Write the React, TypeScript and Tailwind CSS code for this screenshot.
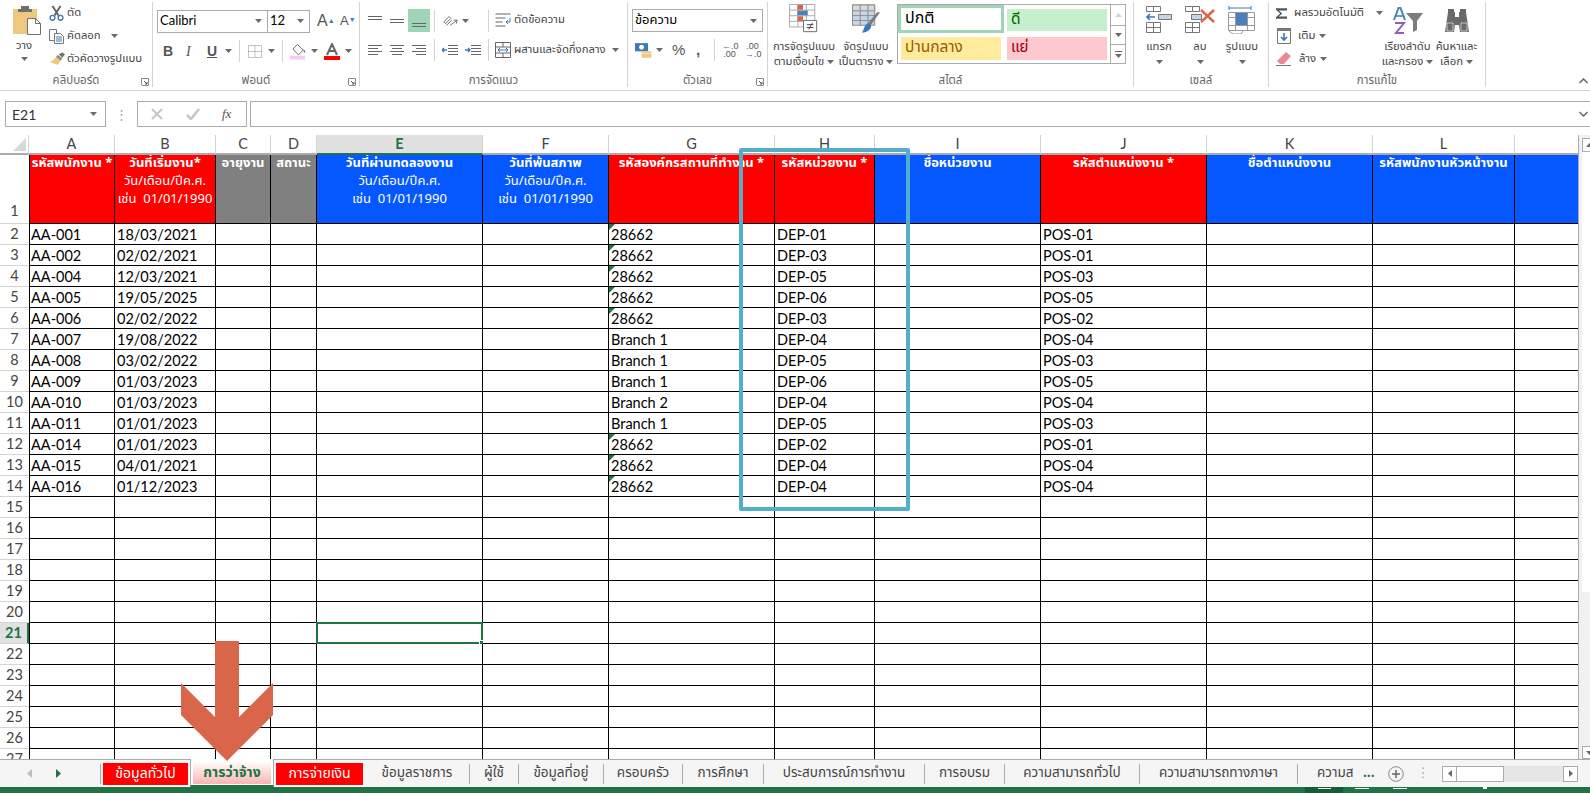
import React from 'react';

const thai = "font-['Noto_Sans_Thai','Noto_Sans','DejaVu_Sans',sans-serif]";

const Caret = ({ className = '' }: { className?: string }) => (
  <svg width="7" height="4" viewBox="0 0 7 4" className={`shrink-0 ${className}`}>
    <path d="M0 0h7L3.5 4z" fill="#6a6a6a" />
  </svg>
);

const Launcher = () => (
  <svg width="8" height="8" viewBox="0 0 8 8" className="shrink-0">
    <path d="M.5 7V.5H7.5V7.5H1" fill="none" stroke="#8a8a8a" />
    <path d="M3 3l3 3M6 4v2H4" fill="none" stroke="#555" />
  </svg>
);

const Group = ({ width, label, launcher, children }: { width: string; label: string; launcher?: boolean; children: React.ReactNode }) => (
  <div className={`${width} h-[85px] shrink-0 border-r border-[#d4d4d4] flex flex-col`}>
    <div className="h-[72px] flex">{children}</div>
    <div className="h-[13px] flex items-center justify-center relative text-[11.5px] leading-none text-[#666]">
      {label}
      {launcher && (
        <span className="absolute right-[3px] top-[4px]">
          <Launcher />
        </span>
      )}
    </div>
  </div>
);

const PasteIcon = () => (
  <svg width="28" height="29" viewBox="0 0 28 29">
    <path d="M0 3h24v25H0z" fill="#edc87e" />
    <path d="M8 0h8v3h3v3H5V3h3z" fill="#6e6e6e" />
    <path d="M14.500 12.500h8l5 5v11h-13z" fill="#fff" stroke="#6e6e6e" />
    <path d="M22.500 12.500v5h5" fill="none" stroke="#6e6e6e" />
  </svg>
);

const ScissorsIcon = () => (
  <svg width="15" height="16" viewBox="0 0 15 16">
    <path d="M3.500 1l6 9.500M11.500 1l-6 9.500" stroke="#666" strokeWidth="2" />
    <circle cx="3.500" cy="12.800" r="2.400" fill="none" stroke="#3d79b8" strokeWidth="1.400" />
    <circle cx="11.500" cy="12.800" r="2.400" fill="none" stroke="#3d79b8" strokeWidth="1.400" />
  </svg>
);

const CopyIcon = () => (
  <svg width="15" height="15" viewBox="0 0 15 15">
    <path d="M.5.5h7v11h-7z" fill="#fff" stroke="#777" />
    <path d="M5.500 4.500h6l3 3v7h-9z" fill="#fff" stroke="#777" />
    <path d="M7 8h6M7 10h6M7 12h6" stroke="#3d79b8" />
  </svg>
);

const BrushIcon = () => (
  <svg width="16" height="15" viewBox="0 0 18 16">
    <path d="M11 2l4 4 3-4-3-2z" fill="#6e6e6e" />
    <path d="M10 3l5 4-5 7-9-3c3-1 6-4 9-8z" fill="#edc87e" />
    <path d="M10 3l5 4-2 2-5-4z" fill="#8a8a8a" />
  </svg>
);

const Lines = ({ widths, y = [0, 3, 6, 9] }: { widths: [number, number][]; y?: number[] }) => (
  <svg width="16" height="12" viewBox="0 0 16 12">
    {widths.map(([x, w], i) => (
      <path key={i} d={`M${x} ${y[i] + 1.5}h${w}`} stroke="#666" />
    ))}
  </svg>
);

const IconCell = ({ children, active }: { children: React.ReactNode; active?: boolean }) => (
  <div className={`w-[22px] h-[23px] flex items-center justify-center ${active ? 'bg-[#9fd5b7]' : ''}`}>{children}</div>
);

const Sep = ({ className = '' }: { className?: string }) => <div className={`w-px h-[22px] shrink-0 bg-[#d4d4d4] ${className}`} />;

const Combo = ({ text, width, font }: { text: string; width: string; font: string }) => (
  <div className={`${width} h-[23px] border border-[#ababab] flex items-center justify-between pl-[2px] pr-[5px] text-[13px] text-black ${font}`}>
    {text}
    <Caret />
  </div>
);

const CondFormatIcon = () => (
  <svg width="30" height="30" viewBox="0 0 32 32">
    <path d="M.5.5h27v24H.5zM.5 6.500h27M.5 12.500h27M.5 18.500h27M9.500.5v24M18.500.5v24" fill="#fff" stroke="#a6a6a6" />
    <path d="M9 1h6v5H9zM9 13h6v5H9z" fill="#d9654a" />
    <path d="M9 7h11v5H9z" fill="#4a80bd" />
    <path d="M15.500 17.500h14v12h-14z" fill="#fff" stroke="#666" />
    <path d="M19 22h7M19 25h7M25 20l-4 7" stroke="#444" />
  </svg>
);

const TableFormatIcon = () => (
  <svg width="29" height="30" viewBox="0 0 30 30">
    <path d="M.5.5h23v21H.5z" fill="#c6d6e9" stroke="#8a8a8a" />
    <path d="M.5.5h23v6H.5z" fill="#d9d9d9" stroke="#8a8a8a" />
    <path d="M.5 11.500h23M.5 16.500h23M8.500.5v21M16.500.5v21" stroke="#8a8a8a" />
    <path d="M29 8L19 22l-3-2L26 8z" fill="#7d7d7d" />
    <path d="M16 20c3 0 5 2 3 5-2 3-6 4-9 4 3-2 2-8 6-9z" fill="#3d79b8" />
  </svg>
);

const InsertIcon = () => (
  <svg width="27" height="28" viewBox="0 0 27 28">
    <path d="M.5.5h14v5H.5zM7.500.5v5M.5 16.500h14v10H.5zM.5 21.500h14M7.500 16.500v10" fill="#fff" stroke="#777" />
    <path d="M12.500 8.500h13v5h-13z" fill="#c6d6e9" stroke="#777" />
    <path d="M1 11h8M4 8l-3 3 3 3" fill="none" stroke="#3d79b8" strokeWidth="1.600" />
  </svg>
);

const DeleteIcon = () => (
  <svg width="30" height="28" viewBox="0 0 30 28">
    <path d="M.5.5h14v5H.5zM7.500.5v5M.5 16.500h14v10H.5zM.5 21.500h14M7.500 16.500v10" fill="#fff" stroke="#777" />
    <path d="M6.500 8.500h10v5h-10z" fill="#c6d6e9" stroke="#777" />
    <path d="M16 4l13 12M29 4L16 16" stroke="#d9654a" strokeWidth="2.400" />
  </svg>
);

const FormatIcon = () => (
  <svg width="28" height="29" viewBox="0 0 28 29">
    <path d="M1 3h22M1 1v4M23 1v4" stroke="#3d79b8" />
    <path d="M.5 7.500h26v18H.5zM.5 12.500h26M.5 20.500h26M7.500 7.500v18M19.500 7.500v18" fill="#fff" stroke="#999" />
    <path d="M8 8h11v12H8z" fill="#4a80bd" />
    <path d="M1 26l4 3h8l2-3" fill="none" stroke="#999" />
  </svg>
);

const SortIcon = () => (
  <svg width="30" height="28" viewBox="0 0 30 28" className="translate-y-[1px]">
    <path d="M1 13L5.500 1h2L12 13" fill="none" stroke="#4a80bd" strokeWidth="2" />
    <path d="M3 9h7" stroke="#4a80bd" strokeWidth="1.600" />
    <path d="M2 16h9L3 26h8" fill="none" stroke="#8e62b0" strokeWidth="2" />
    <path d="M13 6h17l-6 8v9l-4 2V14z" fill="#7d7d7d" />
  </svg>
);

const FindIcon = () => (
  <svg width="26" height="24" viewBox="0 0 26 24" className="-translate-y-[1px]">
    <path d="M4 0h6v3h1v5h4V3h1V0h6v3l3 20H16l-1-7h-4l-1 7H1L4 3z" fill="#6a6a6a" />
    <path d="M3 14h6v8H3zM17 14h6v8h-6z" fill="none" stroke="#fff" strokeWidth=".6" />
  </svg>
);

const SumIcon = () => (
  <svg width="16" height="15" viewBox="0 0 16 15">
    <path d="M0 0h16v3H4l5 4.500L4 12h12v3H0v-2l6-5.500L0 2z" fill="#555" />
  </svg>
);

const BigButton = ({ width, icon, lines }: { width: string; icon: React.ReactNode; lines: React.ReactNode[] }) => (
  <div className={`${width} flex flex-col items-center text-[11.3px] text-[#444]`}>
    <div className="h-[32px] flex items-end justify-center">{icon}</div>
    <div className="h-[15px] mt-[5px] leading-[15px] whitespace-nowrap flex items-center gap-[3px]">{lines[0]}</div>
    <div className="h-[15px] leading-[15px] whitespace-nowrap flex items-center gap-[3px]">{lines[1]}</div>
  </div>
);

const Ribbon = () => (
  <div className={`h-[91px] border-b border-[#d4d4d4] flex pt-[2px] bg-white ${thai}`}>
    <Group width="w-[153px]" label="คลิปบอร์ด" launcher>
      <div className="w-[48px] flex flex-col items-center pt-[4px]">
        <div className="self-start ml-[13px]"><PasteIcon /></div>
        <span className="text-[11.3px] text-[#444] mt-[3px] leading-[15px]">วาง</span>
        <Caret className="mt-[4px]" />
      </div>
      <div className="flex flex-col text-[11.3px] text-[#444] pt-[2px] gap-[5px] whitespace-nowrap">
        <div className="h-[18px] flex items-center"><span className="w-[19px] flex justify-center pr-[2px]"><ScissorsIcon /></span>ตัด</div>
        <div className="h-[18px] flex items-center"><span className="w-[19px] flex pl-[1px]"><CopyIcon /></span>คัดลอก<Caret className="ml-[10px]" /></div>
        <div className="h-[18px] flex items-center"><span className="w-[19px] flex pl-[1px]"><BrushIcon /></span>ตัวคัดวางรูปแบบ</div>
      </div>
    </Group>

    <Group width="w-[207px]" label="ฟอนต์" launcher>
      <div className="flex flex-col pl-[4px] pt-[7px]">
        <div className="flex items-center">
          <Combo text="Calibri" width="w-[111px]" font="font-['Lato',sans-serif]" />
          <Combo text="12" width="w-[43px] -ml-px" font="font-['Lato',sans-serif]" />
          <span className="ml-[7px] w-[23px] text-[16px] text-[#555] font-['Liberation_Sans',sans-serif]">A<sup className="text-[7px] text-[#3d79b8]">▲</sup></span>
          <span className="w-[20px] text-[13px] text-[#555] font-['Liberation_Sans',sans-serif]">A<sup className="text-[7px] text-[#3d79b8]">▼</sup></span>
        </div>
        <div className="flex items-center mt-[6px] h-[24px] text-[#555] font-['Liberation_Serif',serif]">
          <span className="w-[9px] ml-[6px] text-[14px] font-bold font-['Liberation_Sans',sans-serif]">B</span>
          <span className="w-[7px] ml-[14px] text-[14px] italic">I</span>
          <span className="w-[10px] ml-[14px] text-[14px] font-bold underline font-['Liberation_Sans',sans-serif]">U</span>
          <Caret className="ml-[8px]" />
          <Sep className="ml-[7px]" />
          <svg width="14" height="13" viewBox="0 0 14 13" className="ml-[8px]">
            <path d="M.5.500h13v12H.5zM.5 6.500h13M7 .5v12" fill="none" stroke="#8a8a8a" strokeDasharray="1 1" />
          </svg>
          <Caret className="ml-[6px]" />
          <Sep className="ml-[7px]" />
          <svg width="16" height="17" viewBox="0 0 17 17" className="ml-[7px]">
            <path d="M8 1l6 6-5 5-6-6z" fill="#fff" stroke="#666" />
            <path d="M14 6c2 1 3 3 1 4z" fill="#3d79b8" />
            <path d="M0 13h16v4H0z" fill="#fbc9f1" />
          </svg>
          <Caret className="ml-[5px]" />
          <svg width="16" height="17" viewBox="0 0 16 17" className="ml-[6px]">
            <path d="M3 12L8 1l5 11M5 8h6" fill="none" stroke="#666" strokeWidth="2" />
            <path d="M0 13h16v4H0z" fill="#ff0000" />
          </svg>
          <Caret className="ml-[5px]" />
        </div>
      </div>
    </Group>

    <Group width="w-[268px]" label="การจัดแนว">
      <div className="flex flex-col pl-[4px] pt-[7px]">
        <div className="flex items-center">
          <IconCell><Lines widths={[[1, 14], [1, 14]]} /></IconCell>
          <IconCell><Lines widths={[[1, 14], [1, 14]]} y={[3, 6]} /></IconCell>
          <IconCell active><Lines widths={[[1, 14], [1, 14]]} y={[7, 10]} /></IconCell>
          <Sep className="ml-[4px]" />
          <svg width="16" height="16" viewBox="0 0 18 16" className="ml-[7px]">
            <path d="M2 9l6-6 2 2-6 6zM5 13l6-6M9 13l8-6M17 7l-4 0M17 7l-1 4" fill="none" stroke="#666" />
          </svg>
          <Caret className="ml-[4px]" />
          <Sep className="ml-[19px]" />
          <svg width="16" height="15" viewBox="0 0 16 15" className="ml-[6px]">
            <path d="M.5 1h15M.5 5h10M.5 9h7M.5 13h10" stroke="#666" />
            <path d="M15 5v4H11M13 7l-2 2 2 2" fill="none" stroke="#3d79b8" />
          </svg>
          <span className="ml-[3px] text-[11.3px] text-[#444] whitespace-nowrap">ตัดข้อความ</span>
        </div>
        <div className="flex items-center mt-[6px] h-[24px]">
          <IconCell><Lines widths={[[1, 14], [1, 10], [1, 14], [1, 10]]} /></IconCell>
          <IconCell><Lines widths={[[1, 14], [3, 10], [1, 14], [3, 10]]} /></IconCell>
          <IconCell><Lines widths={[[1, 14], [5, 10], [1, 14], [5, 10]]} /></IconCell>
          <Sep className="ml-[4px]" />
          <svg width="16" height="12" viewBox="0 0 16 12" className="ml-[7px]">
            <path d="M6 1.500h10M6 4.500h10M6 7.500h10M6 10.500h10" stroke="#666" />
            <path d="M5 6H0M2 4L0 6l2 2" fill="none" stroke="#3d79b8" strokeWidth="1.400" />
          </svg>
          <svg width="16" height="12" viewBox="0 0 16 12" className="ml-[7px]">
            <path d="M6 1.500h10M6 4.500h10M6 7.500h10M6 10.500h10" stroke="#666" />
            <path d="M0 6h5M3 4l2 2-2 2" fill="none" stroke="#3d79b8" strokeWidth="1.400" />
          </svg>
          <Sep className="ml-[7px]" />
          <svg width="16" height="16" viewBox="0 0 16 16" className="ml-[6px]">
            <path d="M.5.500h15v15H.5zM.5 5h15M.5 11h15M8 .5V5M8 11v4.500" fill="#fff" stroke="#666" />
            <path d="M3 8h10M5 6L3 8l2 2M11 6l2 2-2 2" fill="none" stroke="#3d79b8" />
          </svg>
          <span className="ml-[3px] w-[98px] text-[11.3px] text-[#444] whitespace-nowrap">ผสานและจัดกึ่งกลาง</span>
          <Caret />
        </div>
      </div>
    </Group>

    <Group width="w-[140px]" label="ตัวเลข" launcher>
      <div className="flex flex-col pl-[4px] pt-[7px]">
        <Combo text="ข้อความ" width="w-[131px]" font="" />
        <div className="flex items-center mt-[6px] h-[24px] text-[#555]">
          <svg width="18" height="17" viewBox="0 0 22 18" className="ml-[3px]">
            <path d="M0 0h16v10H0z" fill="#3d79b8" />
            <circle cx="8" cy="5" r="3" fill="#fff" />
            <path d="M8 10h12v2.500H8zM8 13h12v2.500H8zM8 15.500h12V18H8z" fill="#edc87e" />
          </svg>
          <Caret className="ml-[3px]" />
          <span className="ml-[9px] w-[14px] text-[15px] font-['Liberation_Sans',sans-serif]">%</span>
          <span className="ml-[10px] w-[5px] text-[15px] font-bold font-['Liberation_Sans',sans-serif]">,</span>
          <Sep className="ml-[13px]" />
          <div className="ml-[7px] w-[15px] text-[9px] leading-[8px] text-center font-['Liberation_Sans',sans-serif]"><span className="text-[#3d79b8]">←</span>.0<br />.00</div>
          <div className="ml-[8px] w-[15px] text-[9px] leading-[8px] text-center font-['Liberation_Sans',sans-serif]">.00<br /><span className="text-[#3d79b8]">→</span>.0</div>
        </div>
      </div>
    </Group>

    <Group width="w-[366px]" label="สไตล์">
      <div className="flex pl-[3px]">
        <BigButton width="w-[66px]" icon={<CondFormatIcon />} lines={['การจัดรูปแบบ', <>ตามเงื่อนไข<Caret /></>]} />
        <BigButton width="w-[58px]" icon={<TableFormatIcon />} lines={['จัดรูปแบบ', <>เป็นตาราง<Caret /></>]} />
      </div>
      <div className="ml-[2px] mt-[2px] w-[229px] h-[60px] border border-[#ababab] flex">
        <div className="w-[212px] grid grid-cols-[106px_100px] gap-x-[3px] content-start">
          <div className="h-[28px] border-[3px] border-[#9fd5b7] px-[4px] text-[16px] leading-[21px] text-black">ปกติ</div>
          <div className="h-[22px] mt-[4px] bg-[#c6efce] px-[4px] text-[15.5px] leading-[21px] text-[#006100]">ดี</div>
          <div className="h-[23px] mt-[4px] ml-[3px] mr-[3px] bg-[#ffeb9c] px-[4px] text-[15.5px] leading-[22px] text-[#9c5700]">ปานกลาง</div>
          <div className="h-[23px] mt-[4px] bg-[#ffc7ce] px-[4px] text-[15.5px] leading-[22px] text-[#9c0006]">แย่</div>
        </div>
        <div className="flex-1 border-l border-[#ababab] flex flex-col">
          <div className="h-[20px] flex items-center justify-center"><Caret className="rotate-180 opacity-30" /></div>
          <div className="h-[20px] border-y border-[#ababab] flex items-center justify-center"><Caret /></div>
          <div className="flex-1 flex flex-col items-center justify-center gap-[2px]"><div className="w-[7px] h-px bg-[#666]" /><Caret /></div>
        </div>
      </div>
    </Group>

    <Group width="w-[135px]" label="เซลล์">
      <div className="flex pl-[4px]">
        <BigButton width="w-[42px]" icon={<InsertIcon />} lines={['แทรก', <Caret />]} />
        <BigButton width="w-[40px]" icon={<DeleteIcon />} lines={['ลบ', <Caret />]} />
        <BigButton width="w-[44px]" icon={<FormatIcon />} lines={['รูปแบบ', <Caret />]} />
      </div>
    </Group>

    <Group width="w-[217px]" label="การแก้ไข">
      <div className="flex flex-col text-[11.3px] text-[#444] pl-[7px] pt-[2px] gap-[5px] w-[114px] whitespace-nowrap">
        <div className="h-[18px] flex items-center gap-[4px]">
          <SumIcon /><span className="ml-[3px]">ผลรวมอัตโนมัติ</span><Caret className="ml-[8px]" />
        </div>
        <div className="h-[18px] flex items-center gap-[4px]">
          <svg width="14" height="16" viewBox="0 0 14 16" className="ml-[1px] mr-[3px]">
            <path d="M.5.500h13v15H.5z" fill="#fff" stroke="#777" />
            <path d="M0 0h14v3H0z" fill="#777" />
            <path d="M7 5v7M4 9l3 3 3-3" fill="none" stroke="#3d79b8" strokeWidth="1.600" />
          </svg>
          <span>เติม</span><Caret />
        </div>
        <div className="h-[18px] flex items-center gap-[4px]">
          <svg width="16" height="14" viewBox="0 0 16 14" className="mr-[3px]">
            <path d="M10 0l5 4-7 8H4L1 9z" fill="#e98a95" />
            <path d="M0 13.500h15" stroke="#777" />
          </svg>
          <span>ล้าง</span><Caret />
        </div>
      </div>
      <div className="flex">
        <BigButton width="w-[49px]" icon={<SortIcon />} lines={['เรียงลำดับ', <>และกรอง<Caret /></>]} />
        <BigButton width="w-[49px]" icon={<FindIcon />} lines={['ค้นหาและ', <>เลือก<Caret /></>]} />
      </div>
    </Group>

    <div className="flex-1 flex justify-end items-end pb-[6px] pr-[2px]">
      <svg width="9" height="6" viewBox="0 0 9 6"><path d="M.5 5l4-4 4 4" fill="none" stroke="#666" strokeWidth="1.500" /></svg>
    </div>
  </div>
);

const FormulaBar = () => (
  <div className="h-[26px] mt-[10px] flex items-stretch font-['Lato',sans-serif]">
    <div className="ml-[5px] w-[101px] border border-[#ababab] flex items-center justify-between pl-[6px] pr-[8px] text-[14px] text-[#333]">
      E21
      <Caret />
    </div>
    <div className="w-[31px] flex items-center justify-center text-[#aaa] text-[13px] leading-none">⋮</div>
    <div className="w-[110px] border border-[#ababab] flex items-center text-[#bcbcbc]">
      <svg width="12" height="12" viewBox="0 0 12 12" className="ml-[13px]"><path d="M1 1l10 10M11 1L1 11" stroke="#c6c6c6" strokeWidth="2" /></svg>
      <svg width="14" height="12" viewBox="0 0 14 12" className="ml-[23px]"><path d="M1 7l4 4 8-10" fill="none" stroke="#c6c6c6" strokeWidth="2.500" /></svg>
      <span className="ml-[22px] text-[13px] italic text-[#555] font-['Liberation_Serif',serif]">fx</span>
    </div>
    <div className="ml-[3px] flex-1 border-y border-l border-[#ababab] flex items-center justify-end pr-[2px]">
      <svg width="9" height="6" viewBox="0 0 9 6"><path d="M.5 1l4 4 4-4" fill="none" stroke="#666" strokeWidth="1.500" /></svg>
    </div>
  </div>
);

const codes = ['AA-001', 'AA-002', 'AA-004', 'AA-005', 'AA-006', 'AA-007', 'AA-008', 'AA-009', 'AA-010', 'AA-011', 'AA-014', 'AA-015', 'AA-016'];
const startDates = ['18/03/2021', '02/02/2021', '12/03/2021', '19/05/2025', '02/02/2022', '19/08/2022', '03/02/2022', '01/03/2023', '01/03/2023', '01/01/2023', '01/01/2023', '04/01/2021', '01/12/2023'];
const branches = ['28662', '28662', '28662', '28662', '28662', 'Branch 1', 'Branch 1', 'Branch 1', 'Branch 2', 'Branch 1', '28662', '28662', '28662'];
const deps = ['DEP-01', 'DEP-03', 'DEP-05', 'DEP-06', 'DEP-03', 'DEP-04', 'DEP-05', 'DEP-06', 'DEP-04', 'DEP-05', 'DEP-02', 'DEP-04', 'DEP-04'];
const positions = ['POS-01', 'POS-01', 'POS-03', 'POS-05', 'POS-02', 'POS-04', 'POS-03', 'POS-05', 'POS-04', 'POS-03', 'POS-01', 'POS-04', 'POS-04'];

interface Column {
  letter: string;
  width: string;
  fill: string;
  title: string;
  sub?: boolean;
  left?: boolean;
  values?: string[];
}

const columns: Column[] = [
  { letter: 'A', width: 'w-[86px]', fill: 'bg-[#ff0000]', title: 'รหัสพนักงาน *', values: codes, left: true },
  { letter: 'B', width: 'w-[101px]', fill: 'bg-[#ff0000]', title: 'วันที่เริ่มงาน*', sub: true, values: startDates },
  { letter: 'C', width: 'w-[55px]', fill: 'bg-[#808080]', title: 'อายุงาน' },
  { letter: 'D', width: 'w-[46px]', fill: 'bg-[#808080]', title: 'สถานะ' },
  { letter: 'E', width: 'w-[166px]', fill: 'bg-[#0558ff]', title: 'วันที่ผ่านทดลองงาน', sub: true },
  { letter: 'F', width: 'w-[126px]', fill: 'bg-[#0558ff]', title: 'วันที่พ้นสภาพ', sub: true },
  { letter: 'G', width: 'w-[166px]', fill: 'bg-[#ff0000]', title: 'รหัสองค์กรสถานที่ทำงาน *', values: branches },
  { letter: 'H', width: 'w-[100px]', fill: 'bg-[#ff0000]', title: 'รหัสหน่วยงาน *', values: deps },
  { letter: 'I', width: 'w-[166px]', fill: 'bg-[#0558ff]', title: 'ชื่อหน่วยงาน' },
  { letter: 'J', width: 'w-[166px]', fill: 'bg-[#ff0000]', title: 'รหัสตำแหน่งงาน *', values: positions },
  { letter: 'K', width: 'w-[166px]', fill: 'bg-[#0558ff]', title: 'ชื่อตำแหน่งงาน' },
  { letter: 'L', width: 'w-[142px]', fill: 'bg-[#0558ff]', title: 'รหัสพนักงานหัวหน้างาน' },
  { letter: 'M', width: 'w-[202px]', fill: 'bg-[#0558ff]', title: 'ชื่อหัวหน้างาน' }
];

const rowNumbers = Array.from({ length: 26 }, (_, i) => i + 2);

const Sheet = () => (
  <div className="flex-1 min-h-0 mt-[8px] flex">
    <div className="w-[1578px] overflow-hidden">
      {/* column letters */}
      <div className="flex h-[20px] text-[14.5px] text-[#444] font-['Lato',sans-serif]">
        <div className="w-[29px] shrink-0 border-r border-[#d4d4d4] border-b-2 border-b-[#ababab] flex items-end justify-end p-[2px]">
          <svg width="13" height="13" viewBox="0 0 13 13"><path d="M13 0v13H0z" fill="#d8d8d8" /></svg>
        </div>
        {columns.map(col => (
          <div
            key={col.letter}
            className={`${col.width} shrink-0 flex items-center justify-center border-r border-[#d4d4d4] border-b-2 ${
              col.letter === 'E' ? 'bg-[#e1e1e1] border-b-[#217346] text-[#217346] font-bold' : 'border-b-[#ababab]'
            }`}
          >
            {col.letter}
          </div>
        ))}
      </div>

      {/* first row: field titles */}
      <div className="flex h-[69px]">
        <div className="w-[29px] shrink-0 border-b border-[#d4d4d4] flex items-end justify-center pb-[1px] text-[14.5px] text-[#444] font-['Lato',sans-serif]">1</div>
        {columns.map(col => (
          <div
            key={col.letter}
            className={`${col.width} ${col.fill} ${col.left ? 'border-l' : ''} shrink-0 border-r border-b border-black text-white text-[13px] leading-[17px] text-center font-bold whitespace-nowrap overflow-hidden ${thai}`}
          >
            {col.title}
            {col.sub && (
              <div className="font-normal leading-[18px]">
                วัน/เดือน/ปีค.ศ.
                <br />
                เช่น&nbsp; 01/01/1990
              </div>
            )}
          </div>
        ))}
      </div>

      {/* data rows */}
      {rowNumbers.map((n, r) => (
        <div key={n} className="flex h-[21px] text-[14.5px] text-black font-['Lato',sans-serif]">
          <div
            className={`w-[29px] shrink-0 border-b border-[#d4d4d4] flex items-center justify-center text-[#444] ${
              n === 21 ? 'bg-[#e1e1e1] text-[#217346] font-bold border-r-2 border-r-[#217346]' : ''
            }`}
          >
            {n}
          </div>
          {columns.map(col => {
            const value = col.values?.[r] ?? '';
            return (
              <div
                key={col.letter}
                className={`${col.width} ${col.left ? 'border-l pl-[1px]' : 'pl-[2px]'} shrink-0 relative border-r border-b border-black leading-[21px] whitespace-nowrap`}
              >
                {value}
                {value === '28662' && (
                  <svg width="6" height="6" viewBox="0 0 6 6" className="absolute left-0 top-0">
                    <path d="M0 0h6L0 6z" fill="#217346" />
                  </svg>
                )}
                {n === 21 && col.letter === 'E' && (
                  <div className="absolute -left-px -top-px -right-px -bottom-px border-2 border-[#217346]">
                    <div className="absolute -right-[3px] -bottom-[3px] w-[5px] h-[5px] bg-[#217346] border border-white" />
                  </div>
                )}
              </div>
            );
          })}
        </div>
      ))}
    </div>

    {/* vertical scroll bar */}
    <div className="flex-1 overflow-hidden border-l border-[#ababab] flex flex-col bg-[#f1f1f1] pl-[3px] pt-[3px]">
      <div className="w-[17px] h-[14px] shrink-0 bg-white border border-[#ababab] flex items-center pl-[3px]"><Caret className="rotate-180" /></div>
      <div className="w-[17px] h-[440px] shrink-0 bg-white" />
      <div className="flex-1" />
      <div className="w-[17px] h-[13px] shrink-0 bg-white border border-[#ababab] flex items-center pl-[3px]"><Caret /></div>
    </div>
  </div>
);

const tabs = [
  { name: 'ข้อมูลทั่วไป', width: 'w-[89px]', kind: 'red' },
  { name: 'การว่าจ้าง', width: 'w-[84px]', kind: 'active' },
  { name: 'การจ่ายเงิน', width: 'w-[91px]', kind: 'red' },
  { name: 'ข้อมูลราชการ', width: 'w-[105px]', kind: 'plain' },
  { name: 'ผู้ใช้', width: 'w-[49px]', kind: 'plain' },
  { name: 'ข้อมูลที่อยู่', width: 'w-[85px]', kind: 'plain' },
  { name: 'ครอบครัว', width: 'w-[79px]', kind: 'plain' },
  { name: 'การศึกษา', width: 'w-[81px]', kind: 'plain' },
  { name: 'ประสบการณ์การทำงาน', width: 'w-[161px]', kind: 'plain' },
  { name: 'การอบรม', width: 'w-[80px]', kind: 'plain' },
  { name: 'ความสามารถทั่วไป', width: 'w-[135px]', kind: 'plain' },
  { name: 'ความสามารถทางภาษา', width: 'w-[158px]', kind: 'plain' }
];

const TabBar = () => (
  <div className={`h-[28px] shrink-0 border-t border-[#ababab] bg-[#f5f5f5] flex items-center text-[13.5px] text-[#444] ${thai}`}>
    <div className="w-[101px] h-[20px] shrink-0 border-r border-[#ababab] flex items-center">
      <svg width="5" height="9" viewBox="0 0 5 9" className="ml-[27px]"><path d="M5 0v9L0 4.500z" fill="#bdbdbd" /></svg>
      <svg width="5" height="9" viewBox="0 0 5 9" className="ml-[24px]"><path d="M0 0v9l5-4.500z" fill="#217346" /></svg>
    </div>
    {tabs.map(tab => (
      <div key={tab.name} className={`${tab.width} shrink-0 flex items-center whitespace-nowrap`}>
        {tab.kind === 'plain' && (
          <div className="w-full h-[20px] border-r border-[#ababab] flex items-center justify-center">{tab.name}</div>
        )}
        {tab.kind === 'red' && (
          <div className="h-[22px] w-full pl-[2px] pr-[2px] flex">
            <div className="flex-1 bg-[#ff0000] text-white text-[14px] flex items-center justify-center">{tab.name}</div>
          </div>
        )}
        {tab.kind === 'active' && (
          <div className="h-[28px] w-full -mt-px bg-white border-x border-[#ababab] border-b-2 border-b-[#217346] px-[2px] pt-[2px] pb-[1px]">
            <div className="h-full bg-gradient-to-b from-white to-[#f8b4b4] text-[#217346] text-[14px] font-bold flex items-center justify-center">{tab.name}</div>
          </div>
        )}
      </div>
    ))}
    <div className="w-[55px] shrink-0 overflow-hidden whitespace-nowrap pl-[19px]">ความสามารถ</div>
    <div className="ml-[10px] w-[11px] shrink-0 text-[#217346] font-bold leading-none text-center">...</div>
    <svg width="16" height="16" viewBox="0 0 16 16" className="ml-[14px] shrink-0">
      <circle cx="8" cy="8" r="7.300" fill="none" stroke="#8a8a8a" />
      <path d="M4 8h8M8 4v8" stroke="#666" strokeWidth="1.500" />
    </svg>
    <div className="w-[38px] shrink-0 text-center text-[#aaa] leading-none">⋮</div>
    <div className="w-[136px] h-[16px] shrink-0 bg-[#e6e6e6] flex">
      <div className="w-[15px] border border-[#ababab] bg-white flex items-center justify-center">
        <svg width="4" height="7" viewBox="0 0 4 7"><path d="M4 0v7L0 3.500z" fill="#666" /></svg>
      </div>
      <div className="w-[47px] border-y border-r border-[#ababab] bg-white" />
      <div className="flex-1" />
      <div className="w-[15px] border border-[#ababab] bg-white flex items-center justify-center">
        <svg width="4" height="7" viewBox="0 0 4 7"><path d="M0 0v7l4-3.500z" fill="#666" /></svg>
      </div>
    </div>
  </div>
);

const StatusBar = () => (
  <div className="h-[6px] shrink-0 bg-[#217346] flex overflow-hidden">
    <div className="ml-[1305px] w-[38px] bg-[#185c37] flex justify-center">
      <div className="w-[13px] h-px mt-[1px] bg-white" />
    </div>
    <div className="ml-[12px] w-[14px] h-px mt-[1px] bg-white" />
    <div className="ml-[24px] w-[14px] h-px mt-[1px] bg-white" />
    <div className="ml-[76px] w-[4px] h-[2px] bg-white" />
  </div>
);

export default function App() {
  return (
    <div className="relative w-[1590px] h-[793px] overflow-hidden bg-white flex flex-col">
      <Ribbon />
      <FormulaBar />
      <Sheet />
      <TabBar />
      <StatusBar />

      {/* annotations drawn over the spreadsheet */}
      <div className="absolute left-[739px] top-[148px] w-[171px] h-[363px] border-4 border-[#53aec9] rounded-[2px]" />
      <svg width="92" height="120" viewBox="0 0 92 120" className="absolute left-[181px] top-[641px]">
        <path d="M34 0h24v76l34-34v32l-46 46L0 74V42l34 34z" fill="#d9654a" />
      </svg>
    </div>
  );
}
